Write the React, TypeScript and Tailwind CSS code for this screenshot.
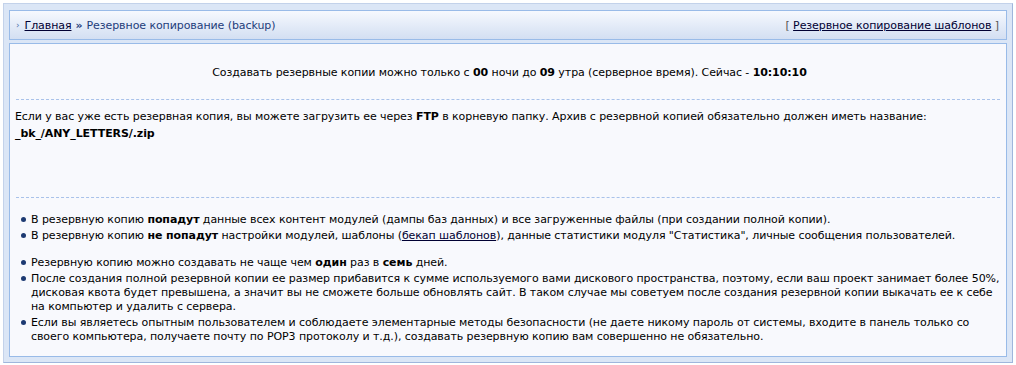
import React from 'react';

const font = { fontFamily: '"DejaVu Sans", Tahoma, "Liberation Sans", sans-serif' };

function Bullet() {
  return <span className="absolute left-[-10px] top-[4px] h-[5px] w-[5px] rounded-full bg-[#1d3a72]" />;
}

function Item({ children }: { children: React.ReactNode }) {
  return (
    <li className="relative mb-[2px]">
      <Bullet />
      {children}
    </li>
  );
}

export default function App() {
  return (
    <div className="bg-white p-[3px] text-[11px] leading-[15px] tracking-[-0.08px] text-black" style={font}>
      <div className="border border-[#c3d2ea] border-r-[#9fb6dc] border-b-[#9fb6dc] bg-[#dbe6f6] px-[5px] pt-[6px] pb-[5px]">
        {/* Header */}
        <div className="flex h-[30px] items-center justify-between border border-[#99bbe8] bg-gradient-to-b from-[#f6f9fe] to-[#d3dff2] px-[6px]">
          <div className="flex items-center text-[#1e3d7b]">
            <span className="mr-[5px] text-[9px] text-[#5677b0]">›</span>
            <a href="#" className="text-[#000033] underline">Главная</a>
            <span className="mx-[4px] font-bold text-[#1e3d7b]">»</span>
            <span>Резервное копирование (backup)</span>
          </div>
          <div className="pr-[1px] text-[#555]">
            [ <a href="#" className="text-[#000033] underline">Резервное копирование шаблонов</a> ]
          </div>
        </div>

        {/* Content */}
        <div className="mt-[3px] border border-[#99bbe8] bg-[#f8f9fd] pl-[5px] pr-[2px] pt-[21px] pb-[10px]">
          <p className="text-center">
            Создавать резервные копии можно только с <b>00</b> ночи до <b>09</b> утра (серверное время). Сейчас - <b>10:10:10</b>
          </p>
          <div className="ml-[1px] mr-[4px] mt-[19px] border-t border-dashed border-[#a9c2ea]" />
          <p className="mt-[9px]">
            Если у вас уже есть резервная копия, вы можете загрузить ее через <b>FTP</b> в корневую папку. Архив с резервной копией обязательно должен иметь название:
          </p>
          <p className="mt-[2px] font-bold">_bk_/ANY_LETTERS/.zip</p>
          <div className="ml-[1px] mr-[4px] mt-[56px] border-t border-dashed border-[#a9c2ea]" />
          <ul className="mt-[15px] pl-[16px] leading-[14px]">
            <Item>В резервную копию <b>попадут</b> данные всех контент модулей (дампы баз данных) и все загруженные файлы (при создании полной копии).</Item>
            <Item>
              В резервную копию <b>не попадут</b> настройки модулей, шаблоны (<a href="#" className="text-[#000033] underline">бекап шаблонов</a>), данные статистики модуля "Статистика", личные сообщения пользователей.
            </Item>
          </ul>
          <ul className="mt-[13px] pl-[16px] leading-[14px]">
            <Item>Резервную копию можно создавать не чаще чем <b>один</b> раз в <b>семь</b> дней.</Item>
            <Item>
              После создания полной резервной копии ее размер прибавится к сумме используемого вами дискового пространства, поэтому, если ваш проект занимает более 50%, дисковая квота будет превышена, а значит вы не сможете больше обновлять сайт. В таком случае мы советуем после создания резервной копии выкачать ее к себе на компьютер и удалить с сервера.
            </Item>
            <Item>
              Если вы являетесь опытным пользователем и соблюдаете элементарные методы безопасности (не даете никому пароль от системы, входите в панель только со своего компьютера, получаете почту по POP3 протоколу и т.д.), создавать резервную копию вам совершенно не обязательно.
            </Item>
          </ul>
        </div>
      </div>
    </div>
  );
}
